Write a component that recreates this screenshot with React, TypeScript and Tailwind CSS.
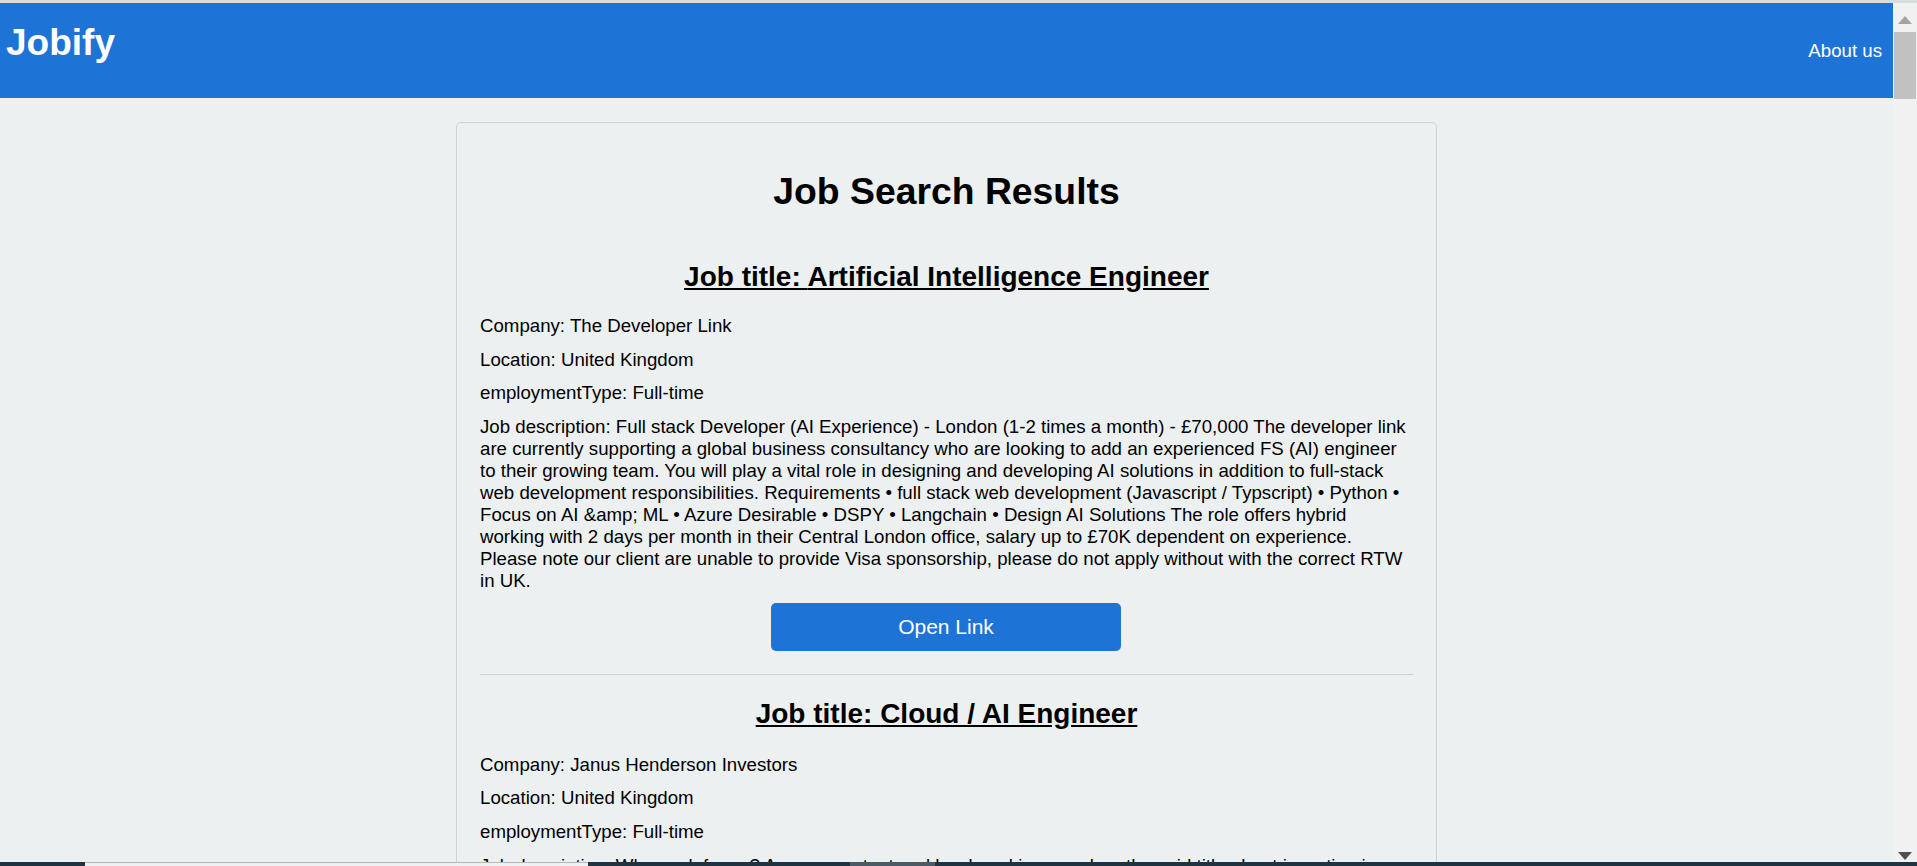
const font = "font-['Liberation_Sans',Arial,sans-serif]";

const jobs = [
  {
    title: "Artificial Intelligence Engineer",
    company: "The Developer Link",
    location: "United Kingdom",
    type: "Full-time",
    description:
      "Full stack Developer (AI Experience) - London (1-2 times a month) - £70,000 The developer link are currently supporting a global business consultancy who are looking to add an experienced FS (AI) engineer to their growing team. You will play a vital role in designing and developing AI solutions in addition to full-stack web development responsibilities. Requirements • full stack web development (Javascript / Typscript) • Python • Focus on AI &amp; ML • Azure Desirable • DSPY • Langchain • Design AI Solutions The role offers hybrid working with 2 days per month in their Central London office, salary up to £70K dependent on experience. Please note our client are unable to provide Visa sponsorship, please do not apply without with the correct RTW in UK.",
  },
  {
    title: "Cloud / AI Engineer",
    company: "Janus Henderson Investors",
    location: "United Kingdom",
    type: "Full-time",
    description:
      "Why work for us? As a competent and hard-working member, the said title about investing in",
  },
];

export default function App() {
  return (
    <div className={`${font} flex h-[866px] w-full flex-col overflow-hidden bg-[#ecf0f1] text-[18.67px] text-black`}>
      <div className="h-[3px] shrink-0 bg-[#d9dcdd]" />
      <div className="flex min-h-0 flex-1">
        <div className="min-w-0 flex-1 overflow-hidden">
          <header className="flex h-[95px] items-start justify-between bg-[#1e73d7] pl-[6px] pr-[11px] text-white">
            <h1 className="mt-[18px] text-[37px] leading-[44px] font-bold">Jobify</h1>
            <a href="#" className="mt-[37px] leading-[22px]">
              About us
            </a>
          </header>
          <main className="mx-auto mt-[24px] w-[981px] rounded-[5px] border border-[#cdd1d3] px-[23px] pt-[48px] pb-[40px]">
            <h1 className="text-center text-[37.33px] leading-[41px] font-bold">Job Search Results</h1>
            {jobs.map((job, i) => (
              <section key={job.title} className={i === 0 ? "mt-[48px]" : ""}>
                <h2 className={`text-center text-[28px] leading-[33px] font-bold underline ${i === 0 ? "" : "mt-[22px]"}`}>
                  Job title: {job.title}
                </h2>
                <p className={`leading-[22px] ${i === 0 ? "mt-[22px]" : "mt-[24px]"}`}>Company: {job.company}</p>
                <p className="mt-[11.6px] leading-[22px]">Location: {job.location}</p>
                <p className="mt-[11.6px] leading-[22px]">employmentType: {job.type}</p>
                <p className="mt-[11.6px] leading-[22px]">Job description: {job.description}</p>
                {i === 0 && (
                  <>
                    <div className="mt-[11px] flex justify-center pr-[1px]">
                      <button className="h-[48px] w-[350px] rounded-[5px] bg-[#1e73d7] text-[21px] text-white">Open Link</button>
                    </div>
                    <hr className="mt-[23px] border-t border-[#cdd1d3]" />
                  </>
                )}
              </section>
            ))}
          </main>
        </div>
        <div className="flex w-[24px] shrink-0 flex-col items-center bg-[#f1f1f1]">
          <svg width="14" height="8" viewBox="0 0 14 8" className="mt-[13px] fill-[#a3a3a3]">
            <path d="M7 0 14 8H0z" />
          </svg>
          <div className="mt-[8px] h-[67px] w-[22px] bg-[#c1c1c1]" />
          <div className="flex-1" />
          <svg width="14" height="8" viewBox="0 0 14 8" className="mb-[2px] fill-[#505050]">
            <path d="M0 0H14L7 8z" />
          </svg>
        </div>
      </div>
      <div className="flex h-[4px] shrink-0 bg-[#1f3443]">
        <div className="ml-[85px] w-[503px] border-t border-[#b5b8b9] bg-[#eef0f1]" />
        <div className="ml-[262px] w-[85px] bg-[#4a5a66]" />
      </div>
    </div>
  );
}
